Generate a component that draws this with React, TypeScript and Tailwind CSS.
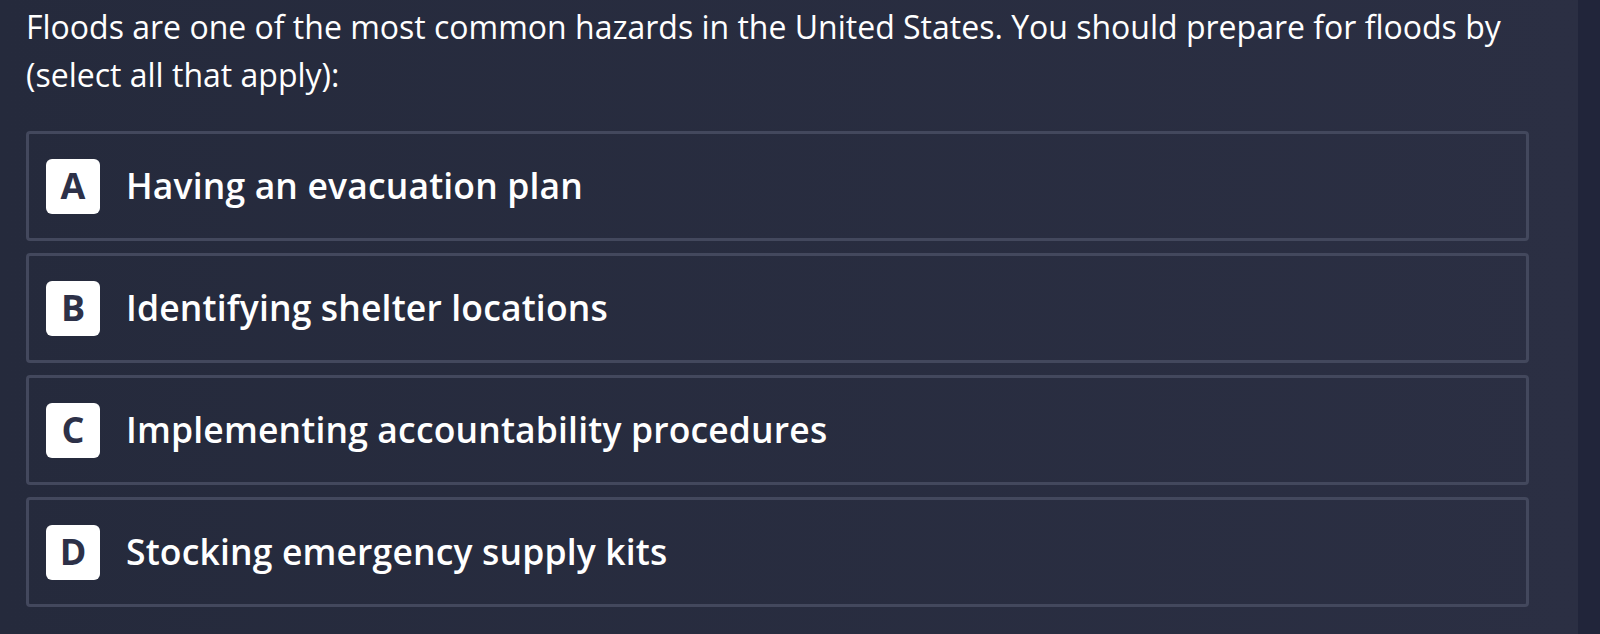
import React from "react";

const options = [
  { letter: "A", text: "Having an evacuation plan" },
  { letter: "B", text: "Identifying shelter locations" },
  { letter: "C", text: "Implementing accountability procedures" },
  { letter: "D", text: "Stocking emergency supply kits" },
];

export default function App() {
  return (
    <div className="flex h-[634px] w-full overflow-hidden">
      <div className="flex-1 bg-gradient-to-r from-[#252a3c] to-[#2b2f43] pl-[26px] pr-[49px] pt-[3px]">
        <p
          className="text-[32px] leading-[48px] text-white"
          style={{ fontFamily: '"Open Sans", sans-serif' }}
        >
          Floods are one of the most common hazards in the United States. You should prepare for floods by (select all that apply):
        </p>
        <div className="mt-[32px] flex flex-col gap-[12px]">
          {options.map((o) => (
            <div
              key={o.letter}
              className="flex h-[110px] items-center rounded-[4px] border-[3px] border-[#43485d] pl-[17px]"
            >
              <div
                className="flex h-[55px] w-[54px] items-center justify-center rounded-[6px] bg-white text-[36px] font-bold text-[#2d3148]"
                style={{ fontFamily: '"Open Sans", sans-serif' }}
              >
                {o.letter}
              </div>
              <span
                className="ml-[26px] text-[35.5px] font-semibold tracking-[0.15px] text-white"
                style={{ fontFamily: '"Open Sans", sans-serif' }}
              >
                {o.text}
              </span>
            </div>
          ))}
        </div>
      </div>
      <div className="w-[22px] bg-[#21253a]" />
    </div>
  );
}
